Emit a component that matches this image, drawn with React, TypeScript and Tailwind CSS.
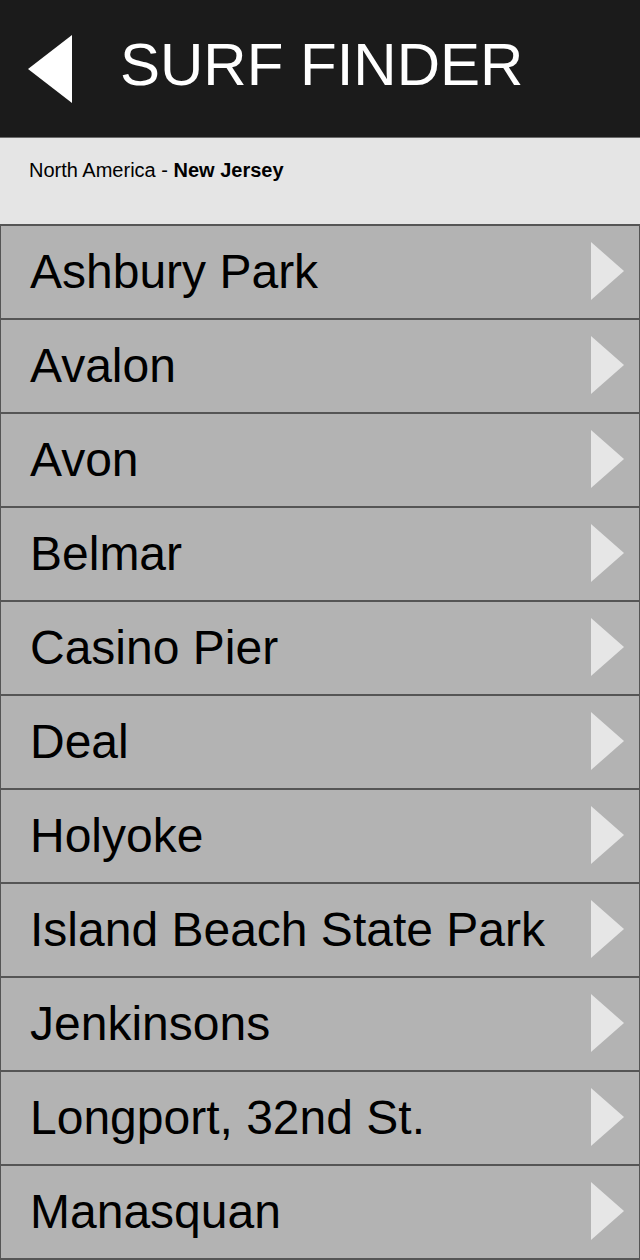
import React, { FC } from 'react';

const spots = [
  'Ashbury Park',
  'Avalon',
  'Avon',
  'Belmar',
  'Casino Pier',
  'Deal',
  'Holyoke',
  'Island Beach State Park',
  'Jenkinsons',
  'Longport, 32nd St.',
  'Manasquan',
];

const font = { fontFamily: '"Liberation Sans", Arial, sans-serif' };

const SpotRow: FC<{ name: string }> = ({ name }) => {
  return (
    <div className="flex h-[94px] items-center justify-between border-x border-t-2 border-[#555555] bg-[#b3b3b3] pl-[29px] pr-[15px]">
      <span className="text-[48px] leading-none text-black">{name}</span>
      <svg width="33" height="58" viewBox="0 0 33 58" className="mb-[2px]">
        <polygon points="0,0 33,29 0,58" fill="#e6e6e6" />
      </svg>
    </div>
  );
};

const App: FC = () => {
  return (
    <div className="flex w-[640px] flex-col bg-[#e5e5e5]" style={font}>
      <header className="flex h-[137px] items-center bg-[#1b1b1b] pl-[28px]">
        <svg width="44" height="68" viewBox="0 0 44 68">
          <polygon points="44,0 44,68 0,34" fill="#ffffff" />
        </svg>
        <h1 className="mb-[8px] ml-[48px] text-[60px] font-normal leading-none text-white">SURF FINDER</h1>
      </header>
      <div className="h-[1px] bg-[#6b6b6b]" />
      <div className="flex h-[86px] items-start bg-[#e5e5e5] pl-[29px] pt-[22px]">
        <p className="text-[20px] leading-none text-black">
          North America - <span className="font-bold">New Jersey</span>
        </p>
      </div>
      <div className="flex flex-col">
        {spots.map((s) => (
          <SpotRow key={s} name={s} />
        ))}
        <div className="h-[2px] bg-[#555555]" />
      </div>
    </div>
  );
};

export default App;
